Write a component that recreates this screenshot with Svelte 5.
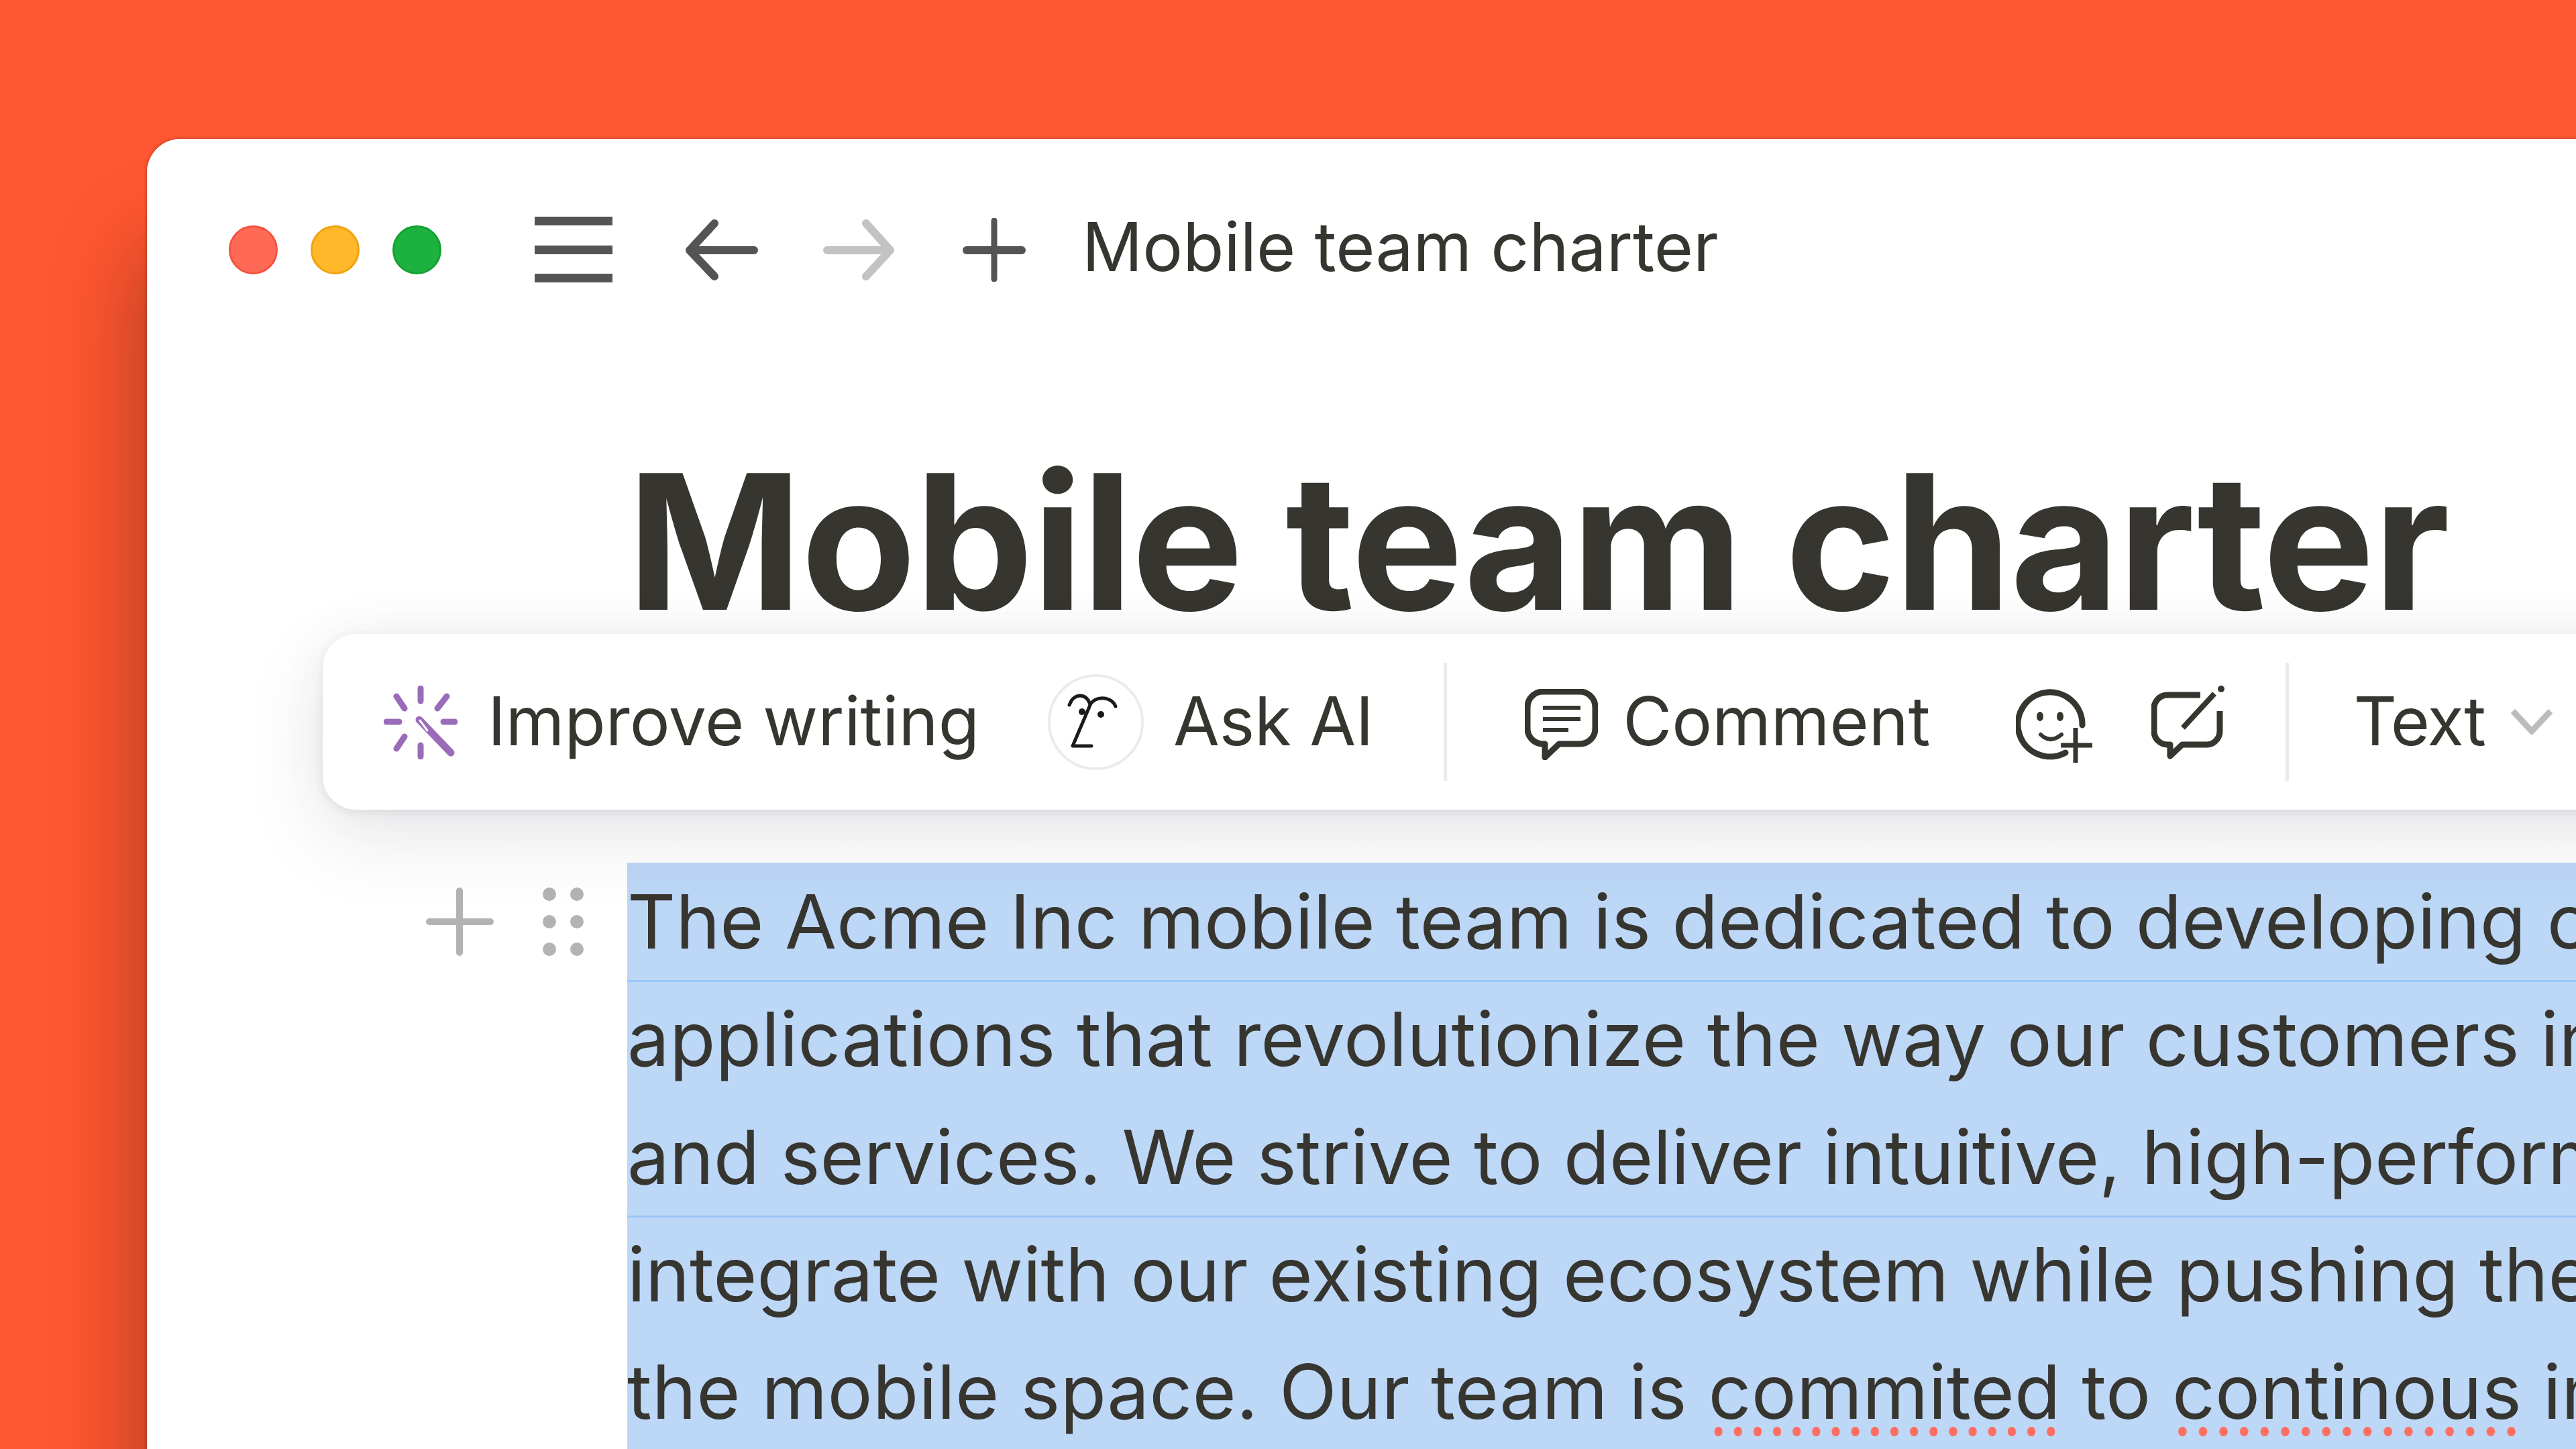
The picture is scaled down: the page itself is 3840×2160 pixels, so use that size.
<script lang="ts">
	const lines = [
		{ text: 'The Acme Inc mobile team is dedicated to developing cutting-edge mobile', track: '-0.1px', sep: false },
		{ text: 'applications that revolutionize the way our customers interact with our products', track: '0', sep: true },
		{ text: 'and services. We strive to deliver intuitive, high-performance experiences that', track: '-0.15px', sep: false },
		{ text: 'integrate with our existing ecosystem while pushing the boundaries of innovation in', track: '-0.2px', sep: true }
	];
</script>

<div class="page">
	<main class="window">
		<header class="titlebar">
			<div class="lights">
				<span class="light red"></span>
				<span class="light yellow"></span>
				<span class="light green"></span>
			</div>
			<svg class="menu" width="116" height="98" viewBox="0 0 116 98" fill="#555353">
				<rect y="0" width="116" height="13" /><rect y="43" width="116" height="13" /><rect y="85" width="116" height="13" />
			</svg>
			<svg class="back" width="109" height="91" viewBox="0 0 109 91" fill="none" stroke="#555353" stroke-width="12" stroke-linecap="round" stroke-linejoin="round">
				<path d="M103 46H7M44 6L7 46L44 85" />
			</svg>
			<svg class="forward" width="107" height="91" viewBox="0 0 107 91" fill="none" stroke="#c4c2c4" stroke-width="12" stroke-linecap="round" stroke-linejoin="round">
				<path d="M6 46H100M64 6L100 46L64 85" />
			</svg>
			<svg class="new" width="94" height="95" viewBox="0 0 94 95" fill="none" stroke="#555353" stroke-linecap="round">
				<path d="M6 48H88" stroke-width="12" /><path d="M47 4V91" stroke-width="9" />
			</svg>
			<span class="doc-name">Mobile team charter</span>
		</header>

		<div class="doc">
			<h1>Mobile team charter</h1>

			<div class="toolbar">
				<svg class="wand" width="110" height="110" viewBox="0 0 110 110" fill="none" stroke="#9a6bb8" stroke-width="9" stroke-linecap="round">
					<path d="M55 4V23M55 89V106M4 54H23M89 54H106M19 16L31 34M94 16L80 34M19 94L31 76" />
					<path d="M53 51L100 100" stroke-width="11" />
					<path d="M54 52L65 67" stroke="#fff" stroke-width="3" />
				</svg>
				<span class="label improve">Improve writing</span>
				<span class="face">
					<svg width="84" height="84" viewBox="0 0 84 84" fill="none" stroke="#1a1a1a" stroke-width="5" stroke-linecap="round" stroke-linejoin="round">
						<path d="M3 17Q8 3 20 3Q30 4 34 16Q42 5 56 7Q68 9 72 19" />
						<path d="M34 17L8 78H36" />
						<circle cx="22" cy="27" r="5" fill="#1a1a1a" stroke="none" />
						<circle cx="50" cy="31" r="5" fill="#1a1a1a" stroke="none" />
					</svg>
				</span>
				<span class="label ask">Ask AI</span>
				<span class="divider first"></span>
				<svg class="comment" width="109" height="106" viewBox="0 0 109 106" fill="none" stroke="#37352f" stroke-width="9" stroke-linejoin="round">
					<path d="M27 4H82a23 23 0 0 1 23 23V59a23 23 0 0 1-23 23H51L30 102V82H27a23 23 0 0 1-23-23V27a23 23 0 0 1 23-23Z" />
					<path d="M27 28H83M27 45H83M27 61H65" stroke-width="6" />
				</svg>
				<span class="label comment-label">Comment</span>
				<svg class="smile" width="114" height="110" viewBox="0 0 114 110" fill="none" stroke="#37352f" stroke-width="9" stroke-linecap="round">
					<path d="M99 54A48 48 0 1 0 74 95" />
					<ellipse cx="36" cy="41" rx="5" ry="7" fill="#37352f" stroke="none" />
					<ellipse cx="66" cy="41" rx="5" ry="7" fill="#37352f" stroke="none" />
					<path d="M37 68Q51 82 68 68" stroke-width="6" />
					<path d="M67 84H114M89 58V110" stroke-width="7" stroke-linecap="butt" />
				</svg>
				<svg class="compose" width="112" height="111" viewBox="0 0 112 111" fill="none" stroke="#37352f" stroke-width="9" stroke-linejoin="round">
					<path d="M73 14H24a20 20 0 0 0-20 20V68a20 20 0 0 0 20 20H28V105L46 88H82a20 20 0 0 0 20-20V38" />
					<path d="M47 63L94 12" stroke-width="8" />
					<circle cx="104" cy="5" r="5" fill="#37352f" stroke="none" />
				</svg>
				<span class="divider second"></span>
				<span class="label text-label">Text</span>
				<svg class="chevron" width="62" height="38" viewBox="0 0 62 38" fill="none" stroke="#bdbbbd" stroke-width="9">
					<path d="M3 3L31 33L59 3" />
				</svg>
			</div>

			<div class="block">
				<div class="handles">
					<svg width="101" height="102" viewBox="0 0 101 102" fill="none" stroke="#b5b2b5" stroke-width="10" stroke-linecap="round">
						<path d="M5 51H96M50 5V97" />
					</svg>
					<div class="grip">
						{#each Array(6) as _}
							<span></span>
						{/each}
					</div>
				</div>
				<div class="selection">
					{#each lines as line}
						<div class="line" class:sep={line.sep} style:letter-spacing={line.track}>{line.text}</div>
					{/each}
					<div class="line last">the mobile space. Our team is <span class="typo">commited</span> to <span class="typo">continous</span> improvement</div>
				</div>
			</div>
		</div>
	</main>
</div>

<style>
	:global(body) {
		margin: 0;
		background: #ff5731;
	}

	.page {
		width: 3840px;
		height: 2160px;
		overflow: hidden;
		padding: 207px 0 0 219px;
		box-sizing: border-box;
		background: #ff5731;
		font-family: Inter, "Liberation Sans", sans-serif;
		color: #37352f;
	}

	.window {
		position: relative;
		width: 3800px;
		height: 2100px;
		background: #fff;
		border-radius: 50px 0 0 0;
		box-shadow: 0 0 5px rgba(60, 20, 0, 0.45), -10px 160px 130px rgba(60, 20, 0, 0.4);
	}

	.titlebar {
		display: flex;
		align-items: center;
		height: 330px;
		padding-left: 122px;
	}

	.lights {
		display: flex;
		gap: 49px;
	}

	.light {
		width: 73px;
		height: 73px;
		border-radius: 50%;
		box-sizing: border-box;
		border: 3px solid;
	}

	.red {
		background: #ff6a57;
		border-color: #f4523f;
	}

	.yellow {
		background: #ffb829;
		border-color: #f0a30f;
	}

	.green {
		background: #1db13f;
		border-color: #12a233;
	}

	.menu {
		margin-left: 139px;
	}

	.back {
		margin-left: 108px;
	}

	.forward {
		margin-left: 97px;
	}

	.new {
		margin-left: 101px;
	}

	.doc-name {
		margin: -10px 0 0 84px;
		font-size: 100px;
		white-space: nowrap;
	}

	.doc {
		padding-left: 416px;
	}

	h1 {
		margin: 0 0 269px 300px;
		padding-top: 61px;
		font-size: 280px;
		font-weight: 700;
		line-height: 419px;
		letter-spacing: -1.8px;
		white-space: nowrap;
	}

	.toolbar {
		position: absolute;
		z-index: 2;
		left: 262px;
		top: 738px;
		width: 3700px;
		height: 262px;
		display: flex;
		align-items: center;
		padding-left: 91px;
		box-sizing: border-box;
		background: #fff;
		border-radius: 50px;
		box-shadow: 0 40px 120px rgba(45, 35, 60, 0.11), 0 0 80px rgba(45, 35, 60, 0.04), 0 3px 14px rgba(45, 35, 60, 0.09);
	}

	.label {
		margin-top: -3px;
		font-size: 100px;
		white-space: nowrap;
	}

	.wand {
		margin-top: 2px;
	}

	.improve {
		margin-left: 45px;
	}

	.face {
		display: flex;
		align-items: center;
		justify-content: center;
		width: 143px;
		height: 143px;
		box-sizing: border-box;
		margin-left: 102px;
		border: 4px solid #ecebec;
		border-radius: 50%;
	}

	.ask {
		margin-left: 44px;
		letter-spacing: -0.4px;
	}

	.divider {
		width: 5px;
		height: 176px;
		background: #ece9ec;
	}

	.first {
		margin-left: 105px;
	}

	.comment {
		margin: 8px 0 0 116px;
	}

	.comment-label {
		margin-left: 37px;
	}

	.smile {
		margin: 12px 0 0 127px;
	}

	.compose {
		margin: 3px 0 0 88px;
	}

	.second {
		margin-left: 88px;
	}

	.text-label {
		margin-left: 97px;
		letter-spacing: -1.5px;
	}

	.chevron {
		margin-left: 38px;
	}

	.block {
		display: flex;
	}

	.handles {
		display: flex;
		flex: none;
		gap: 73px;
		align-items: flex-start;
		width: 300px;
		padding-top: 37px;
	}

	.grip {
		display: grid;
		grid-template-columns: 20px 20px;
		column-gap: 21px;
		row-gap: 21px;
	}

	.grip span {
		width: 20px;
		height: 20px;
		border-radius: 50%;
		background: #b5b2b5;
	}

	.selection {
		flex: 1;
		min-width: 0;
		font-size: 112px;
		background: #bdd7f7;
	}

	.line {
		height: 175.25px;
		line-height: 175px;
		white-space: nowrap;
	}

	.last {
		letter-spacing: 0.15px;
	}

	.sep {
		box-shadow: inset 0 3px 0 #9cc6f8;
	}

	.typo {
		position: relative;
	}

	.typo::after {
		content: "";
		position: absolute;
		left: 0;
		right: 0;
		bottom: 1px;
		height: 14px;
		background: radial-gradient(ellipse 6.5px 7.5px at center, #ff6f61 90%, transparent 100%) 0 0 / 30px 14px round no-repeat;
	}
</style>
